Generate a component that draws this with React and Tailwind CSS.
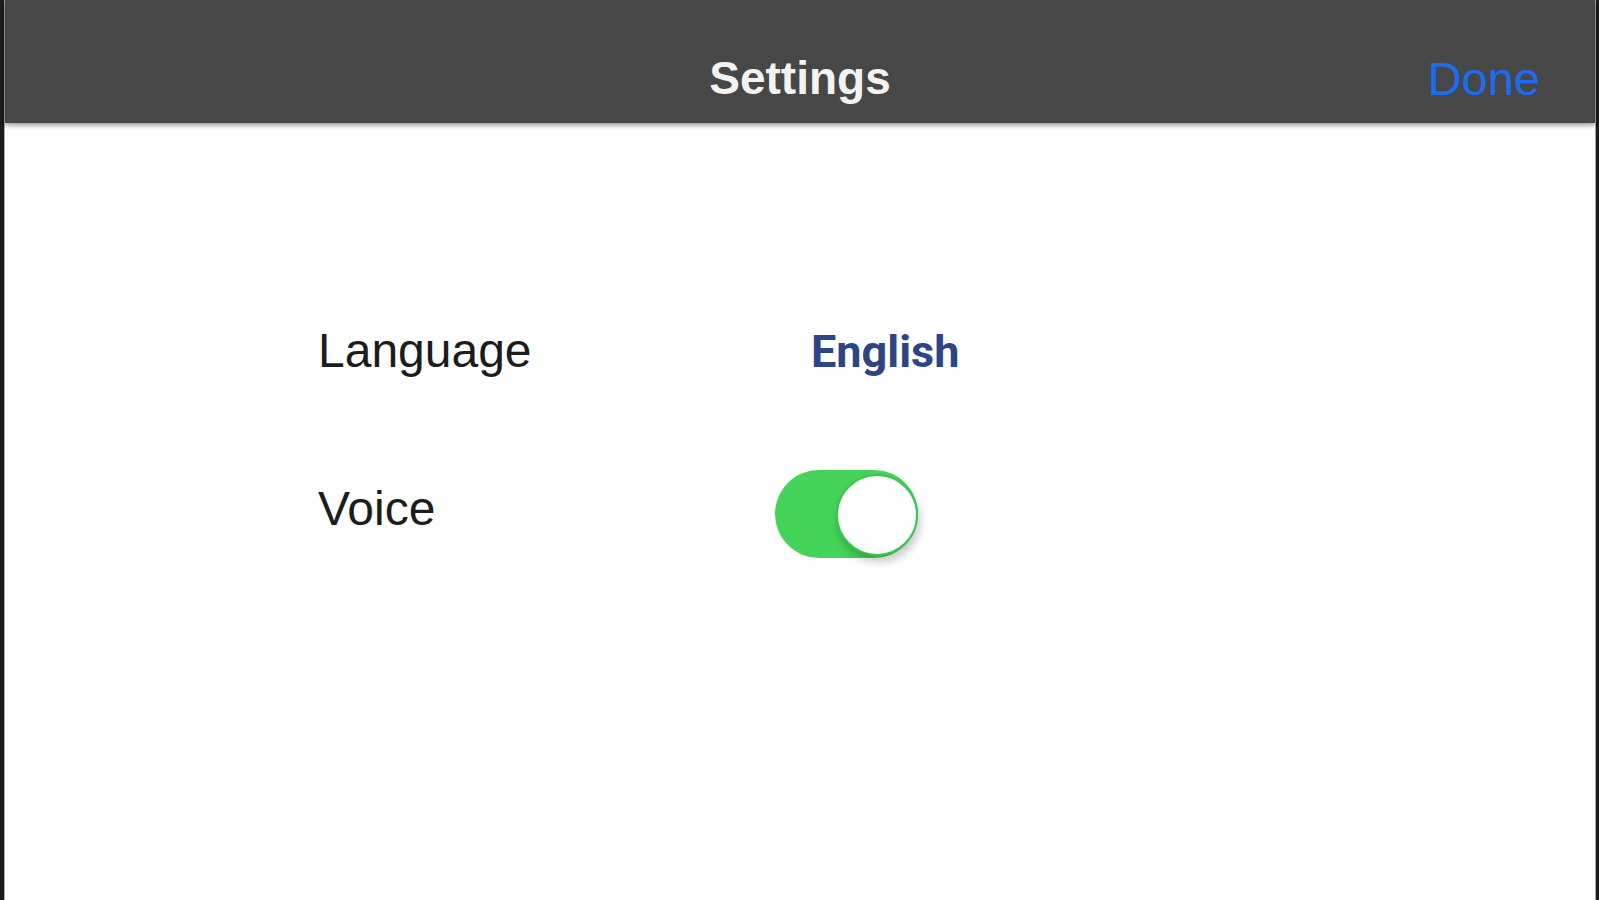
import React from "react";

export default function App() {
  return (
    <div className="flex h-[900px] w-full bg-[#1c1c1c] overflow-hidden" style={{ fontFamily: '"Liberation Sans", Arial, sans-serif' }}>
      <div className="w-[4px] shrink-0 bg-[#1c1c1c]" />
      <div className="flex flex-1 flex-col bg-white border-l border-r border-[#a8a8a8]">
        <div className="relative z-10 grid h-[123px] shrink-0 grid-cols-[1fr_auto_1fr] items-start bg-[#474747] pt-[55px] shadow-[0_2px_5px_rgba(0,0,0,0.45)]">
          <div />
          <div className="text-[46px] leading-none font-bold text-[#f3f3f3]">Settings</div>
          <div className="flex justify-end">
            <div className="mr-[55px] text-[47px] leading-none text-[#1a6df2]">Done</div>
          </div>
        </div>
        <div className="flex flex-col pl-[313px] pt-[204px]">
          <div className="flex items-center">
            <div className="w-[457px] text-[48px] leading-none text-[#1c1c1c]">Language</div>
            <div className="ml-[36px] text-[45px] leading-none font-bold text-[#2d4585]" style={{ fontFamily: 'Roboto, "Liberation Sans", sans-serif' }}>English</div>
          </div>
          <div className="mt-[95px] flex items-center">
            <div className="w-[457px] pb-[10px] text-[48px] leading-none text-[#1c1c1c]">Voice</div>
            <div className="relative h-[88px] w-[143px] rounded-full bg-[#46d35a]">
              <div className="absolute right-[0px] top-[4px] h-[82px] w-[82px] rounded-full border-2 border-[#3cc450] bg-white shadow-[2px_6px_8px_rgba(0,0,0,0.22)]" />
            </div>
          </div>
        </div>
      </div>
      <div className="w-[3px] shrink-0 bg-[#1c1c1c]" />
    </div>
  );
}
